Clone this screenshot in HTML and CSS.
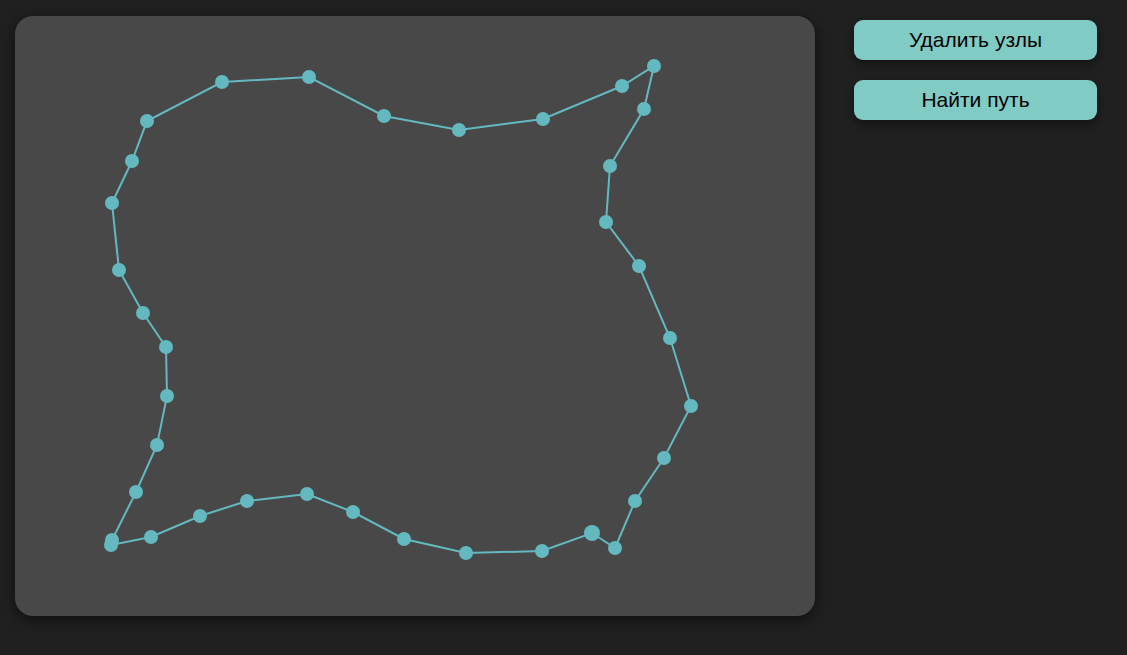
FILE: index.html
```html
<!DOCTYPE html>
<html lang="en">
<head>
    <meta charset="UTF-8">
    <meta name="viewport" content="width=device-width, initial-scale=1.0">
    <title>Граф</title>
    <link rel="stylesheet" href="styles.css">
</head>
<body>

    <div class="board">
        <svg class="graph" width="800" height="600" viewBox="14 15 800 600">
            <polygon class="edges" points="221,81 308,76 383,115 458,129 542,118 621,85 653,65 643,108 609,165 605,221 638,265 669,337 690,405 663,457 634,500 614,547 591,532 541,550 465,552 403,538 352,511 306,493 246,500 199,515 150,536 110,544 111,539 135,491 156,444 166,395 165,346 142,312 118,269 111,202 131,160 146,120"/>
            <g class="nodes">
                <circle cx="221" cy="81" r="7"/>
                <circle cx="308" cy="76" r="7"/>
                <circle cx="383" cy="115" r="7"/>
                <circle cx="458" cy="129" r="7"/>
                <circle cx="542" cy="118" r="7"/>
                <circle cx="621" cy="85" r="7"/>
                <circle cx="653" cy="65" r="7"/>
                <circle cx="643" cy="108" r="7"/>
                <circle cx="609" cy="165" r="7"/>
                <circle cx="605" cy="221" r="7"/>
                <circle cx="638" cy="265" r="7"/>
                <circle cx="669" cy="337" r="7"/>
                <circle cx="690" cy="405" r="7"/>
                <circle cx="663" cy="457" r="7"/>
                <circle cx="634" cy="500" r="7"/>
                <circle cx="614" cy="547" r="7"/>
                <circle cx="591" cy="532" r="8"/>
                <circle cx="541" cy="550" r="7"/>
                <circle cx="465" cy="552" r="7"/>
                <circle cx="403" cy="538" r="7"/>
                <circle cx="352" cy="511" r="7"/>
                <circle cx="306" cy="493" r="7"/>
                <circle cx="246" cy="500" r="7"/>
                <circle cx="199" cy="515" r="7"/>
                <circle cx="150" cy="536" r="7"/>
                <circle cx="110" cy="544" r="7"/>
                <circle cx="111" cy="539" r="7"/>
                <circle cx="135" cy="491" r="7"/>
                <circle cx="156" cy="444" r="7"/>
                <circle cx="166" cy="395" r="7"/>
                <circle cx="165" cy="346" r="7"/>
                <circle cx="142" cy="312" r="7"/>
                <circle cx="118" cy="269" r="7"/>
                <circle cx="111" cy="202" r="7"/>
                <circle cx="131" cy="160" r="7"/>
                <circle cx="146" cy="120" r="7"/>
            </g>
        </svg>
    </div>

    <div class="controls">
        <button id="clearBtn">Удалить узлы</button>
        <button id="pathBtn">Найти путь</button>
    </div>

</body>
</html>
```

FILE: styles.css
```css
body {
    font-family: 'Liberation Sans', Arial, sans-serif;
    background-color: #202020;
    margin: 0;
    padding: 16px 15px;
    display: flex;
    align-items: flex-start;
    gap: 39px;
}

.board {
    width: 800px;
    height: 600px;
    background-color: #484848;
    border-radius: 18px;
    box-shadow: 0 4px 14px rgba(0, 0, 0, 0.55);
    overflow: hidden;
}

.graph {
    display: block;
}

.edges {
    fill: none;
    stroke: #63b9bf;
    stroke-width: 2;
}

.nodes circle {
    fill: #63b9bf;
}

.controls {
    display: flex;
    flex-direction: column;
    gap: 20px;
    padding-top: 4px;
    width: 243px;
}

button {
    height: 40px;
    font-family: inherit;
    font-size: 21px;
    color: #000;
    background-color: #80cbc4;
    border: none;
    border-radius: 9px;
    box-shadow: 0 4px 10px rgba(0, 0, 0, 0.45);
    cursor: pointer;
}

button:hover {
    background-color: #9ad8d2;
}
```
